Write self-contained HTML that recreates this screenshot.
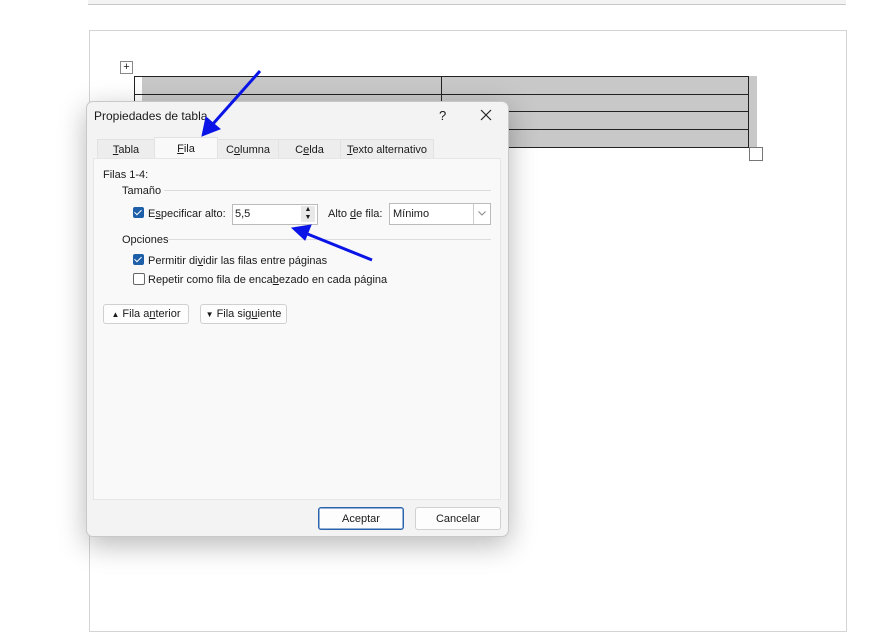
<!DOCTYPE html>
<html><head><style>
body{margin:0;width:886px;height:616px;background:#fff;position:relative;overflow:hidden;font-family:"Liberation Sans",sans-serif;font-size:11px;color:#1a1a1a}
.a{position:absolute}
u{text-decoration:underline}
.cb{position:absolute;width:11px;height:11px;border-radius:2px;background:#1d5fa8}
.cb:after{content:"";position:absolute;left:3px;top:1px;width:3px;height:6px;border:solid #fff;border-width:0 1.5px 1.5px 0;transform:rotate(45deg)}
.btn{position:absolute;background:#fdfdfd;border:1px solid #d0d0d0;border-radius:3px;font-size:11px;text-align:center}
</style></head><body>
<div class="a" style="left:88px;top:0;width:758px;height:4px;background:#f3f3f3;border-bottom:1px solid #c8c8c8"></div>
<div class="a" style="left:89px;top:30px;width:756px;height:600px;border:1px solid #d4d4d4"></div>
<div class="a" style="left:120px;top:61px;width:11px;height:11px;border:1px solid #888;font-size:11px;line-height:11px;text-align:center">+</div>
<div class="a" style="left:142px;top:76px;width:615px;height:71px;background:#c8c8c8"></div>
<div class="a" style="left:134px;top:76px;width:613px;height:70px;border:1px solid #222"></div>
<div class="a" style="left:134px;top:94px;width:614px;height:1px;background:#222"></div>
<div class="a" style="left:134px;top:111px;width:614px;height:1px;background:#222"></div>
<div class="a" style="left:134px;top:129px;width:614px;height:1px;background:#222"></div>
<div class="a" style="left:441px;top:76px;width:1px;height:71px;background:#222"></div>
<div class="a" style="left:749px;top:147px;width:12px;height:12px;border:1px solid #777;background:#fff"></div>
<div class="a" style="left:86px;top:101px;width:421px;height:434px;background:#f3f3f3;border:1px solid #c8c8c8;border-radius:7px;box-shadow:0 8px 28px rgba(0,0,0,.28)"></div>
<div class="a" style="left:94px;top:109px;font-size:12px">Propiedades de tabla</div>
<div class="a" style="left:439px;top:108px;font-size:13px">?</div>
<svg class="a" style="left:480px;top:109px" width="12" height="12"><path d="M1 1L11 11M11 1L1 11" stroke="#222" stroke-width="1.2"/></svg>
<div class="a" style="left:97px;top:139px;width:56px;height:19px;background:#ededed;border:1px solid #e2e2e2;text-align:center;line-height:21px"><u>T</u>abla</div>
<div class="a" style="left:154px;top:137px;width:62px;height:22px;background:#f9f9f9;border:1px solid #e2e2e2;border-bottom:none;text-align:center;line-height:23px"><u>F</u>ila</div>
<div class="a" style="left:217px;top:139px;width:60px;height:19px;background:#ededed;border:1px solid #e2e2e2;text-align:center;line-height:21px">C<u>o</u>lumna</div>
<div class="a" style="left:278px;top:139px;width:61px;height:19px;background:#ededed;border:1px solid #e2e2e2;text-align:center;line-height:21px">C<u>e</u>lda</div>
<div class="a" style="left:340px;top:139px;width:92px;height:19px;background:#ededed;border:1px solid #e2e2e2;text-align:center;line-height:21px"><u>T</u>exto alternativo</div>
<div class="a" style="left:93px;top:158px;width:406px;height:340px;background:#f9f9f9;border:1px solid #e6e6e6"></div>
<div class="a" style="left:103px;top:169px">Filas 1-4:</div>
<div class="a" style="left:122px;top:185px">Tamaño</div>
<div class="a" style="left:164px;top:190px;width:327px;height:1px;background:#dcdcdc"></div>
<div class="cb" style="left:133px;top:207px"></div>
<div class="a" style="left:148px;top:208px">E<u>s</u>pecificar alto:</div>
<div class="a" style="left:232px;top:204px;width:84px;height:19px;background:#fff;border:1px solid #bbb"></div>
<div class="a" style="left:235px;top:208px">5,5</div>
<div class="a" style="left:301px;top:206px;width:14px;height:8px;background:#e8e8e8;font-size:7px;line-height:8px;text-align:center">▲</div>
<div class="a" style="left:301px;top:214px;width:14px;height:8px;background:#e8e8e8;font-size:7px;line-height:8px;text-align:center">▼</div>
<div class="a" style="left:328px;top:208px">Alto <u>d</u>e fila:</div>
<div class="a" style="left:389px;top:203px;width:100px;height:20px;background:#fff;border:1px solid #bbb"></div>
<div class="a" style="left:393px;top:208px">Mínimo</div>
<div class="a" style="left:473px;top:204px;width:1px;height:20px;background:#ccc"></div>
<svg class="a" style="left:478px;top:211px" width="8" height="5"><path d="M0.5 0.5L4 4L7.5 0.5" stroke="#888" fill="none"/></svg>
<div class="a" style="left:122px;top:234px">Opciones</div>
<div class="a" style="left:168px;top:239px;width:323px;height:1px;background:#dcdcdc"></div>
<div class="cb" style="left:133px;top:254px"></div>
<div class="a" style="left:148px;top:255px">Permitir di<u>v</u>idir las filas entre páginas</div>
<div class="a" style="left:133px;top:273px;width:10px;height:10px;border:1px solid #666;border-radius:2px;background:#fff"></div>
<div class="a" style="left:148px;top:274px">Repetir como fila de enca<u>b</u>ezado en cada página</div>
<div class="btn" style="left:103px;top:304px;width:84px;height:18px;line-height:19px"><span style="font-size:8px">▲</span> Fila a<u>n</u>terior</div>
<div class="btn" style="left:200px;top:304px;width:85px;height:18px;line-height:19px"><span style="font-size:8px">▼</span> Fila sig<u>u</u>iente</div>
<div class="btn" style="left:318px;top:507px;width:84px;height:21px;line-height:23px;border:1px solid #2b64ad;box-shadow:inset 0 0 0 0.5px #2b64ad">Aceptar</div>
<div class="btn" style="left:415px;top:507px;width:84px;height:21px;line-height:23px">Cancelar</div>
<svg class="a" style="left:0;top:0" width="886" height="616">
<g stroke="#0a14e6" stroke-width="3" fill="#0a14e6">
<line x1="260" y1="71" x2="212" y2="125"/>
<polygon points="202,136 206,117 220,129" stroke-width="1"/>
<line x1="372" y1="260" x2="305" y2="233"/>
<polygon points="292,228 311,225 305,240" stroke-width="1"/>
</g></svg>
</body></html>
